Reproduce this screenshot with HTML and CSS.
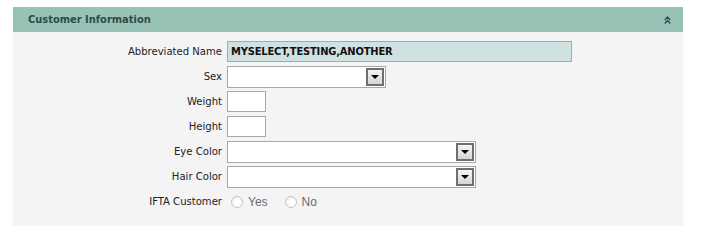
FILE: index.html
```html
<!DOCTYPE html>
<html>
<head>
<meta charset="utf-8">
<link rel="stylesheet" href="styles.css">
</head>
<body>
<div class="panel">
  <div class="panel-header">
    <span class="panel-title">Customer Information</span>
    <svg class="collapse" width="7" height="8" viewBox="0 0 7 8"><path d="M0.7 4 L3.5 1 L6.3 4 M0.7 7.5 L3.5 4.5 L6.3 7.5" fill="none" stroke="#2d4b47" stroke-width="1.3"/></svg>
  </div>
  <div class="panel-body">
    <div class="form">
      <label class="lbl">Abbreviated Name</label>
      <div class="field"><div class="input readonly w-abbr">MYSELECT,TESTING,ANOTHER</div></div>

      <label class="lbl">Sex</label>
      <div class="field"><div class="select w-sex"><span class="btn"><span class="tri"></span></span></div></div>

      <label class="lbl">Weight</label>
      <div class="field"><div class="input w-num"></div></div>

      <label class="lbl">Height</label>
      <div class="field"><div class="input w-num"></div></div>

      <label class="lbl">Eye Color</label>
      <div class="field"><div class="select w-color"><span class="btn"><span class="tri"></span></span></div></div>

      <label class="lbl">Hair Color</label>
      <div class="field"><div class="select w-color"><span class="btn"><span class="tri"></span></span></div></div>

      <label class="lbl">IFTA Customer</label>
      <div class="field radios">
        <span class="radio"><span class="circle"></span><span class="rtext">Yes</span></span>
        <span class="radio"><span class="circle"></span><span class="rtext">No</span></span>
      </div>
    </div>
  </div>
</div>
</body>
</html>
```
FILE: styles.css
```css
html, body {
  margin: 0;
  padding: 0;
  background: #ffffff;
}
body {
  padding: 7px 0 0 13px;
  font-family: "DejaVu Sans Condensed", "DejaVu Sans", sans-serif;
  font-size: 11px;
  color: #222;
}
.panel {
  width: 670px;
  background: #f4f4f4;
}
.panel-header {
  height: 25px;
  background: #98c2b6;
  display: flex;
  align-items: center;
  justify-content: space-between;
  padding: 0 12px 0 15px;
}
.panel-title {
  font-weight: bold;
  font-size: 11px;
  color: #2e4b48;
}
.collapse {
  display: block;
}
.panel-body {
  padding: 9px 0 10px 0;
}
.form {
  display: grid;
  grid-template-columns: 209px auto;
  grid-auto-rows: 25px;
  column-gap: 5px;
  align-items: start;
}
.lbl {
  text-align: right;
  line-height: 22px;
  height: 22px;
  white-space: nowrap;
  font-size: 11.2px;
}
.field {
  display: flex;
  align-items: flex-start;
}
.input {
  box-sizing: border-box;
  height: 21px;
  background: #fff;
  border: 1px solid #a8a8a8;
}
.readonly {
  background: #d0e1e1;
  font-weight: bold;
  color: #111;
  line-height: 19px;
  padding-left: 3px;
  letter-spacing: -0.15px;
}
.w-abbr { width: 345px; }
.w-num { width: 39px; }
.select {
  box-sizing: border-box;
  height: 22px;
  background: #fff;
  border: 1px solid #a8a8a8;
  display: flex;
  justify-content: flex-end;
  align-items: center;
  padding-right: 1px;
}
.w-sex { width: 159px; }
.w-color { width: 249px; }
.btn {
  box-sizing: border-box;
  width: 18px;
  height: 18px;
  border: 2px solid #6f6f6f;
  background: linear-gradient(#f4f4f4, #d6d6d6);
  display: flex;
  align-items: center;
  justify-content: center;
}
.tri {
  width: 0;
  height: 0;
  border-left: 4px solid transparent;
  border-right: 4px solid transparent;
  border-top: 4px solid #000;
}
.radios {
  height: 22px;
  align-items: center;
  gap: 17px;
  padding-left: 4px;
}
.radio {
  display: flex;
  align-items: center;
  gap: 5px;
}
.circle {
  box-sizing: border-box;
  width: 12px;
  height: 12px;
  border-radius: 50%;
  border: 1px solid #c4c4c4;
  background: radial-gradient(circle at 60% 60%, #ffffff 30%, #ececec 100%);
}
.rtext {
  font-family: "Liberation Sans", Arial, sans-serif;
  font-size: 12px;
  color: #6b6b6b;
}
```
